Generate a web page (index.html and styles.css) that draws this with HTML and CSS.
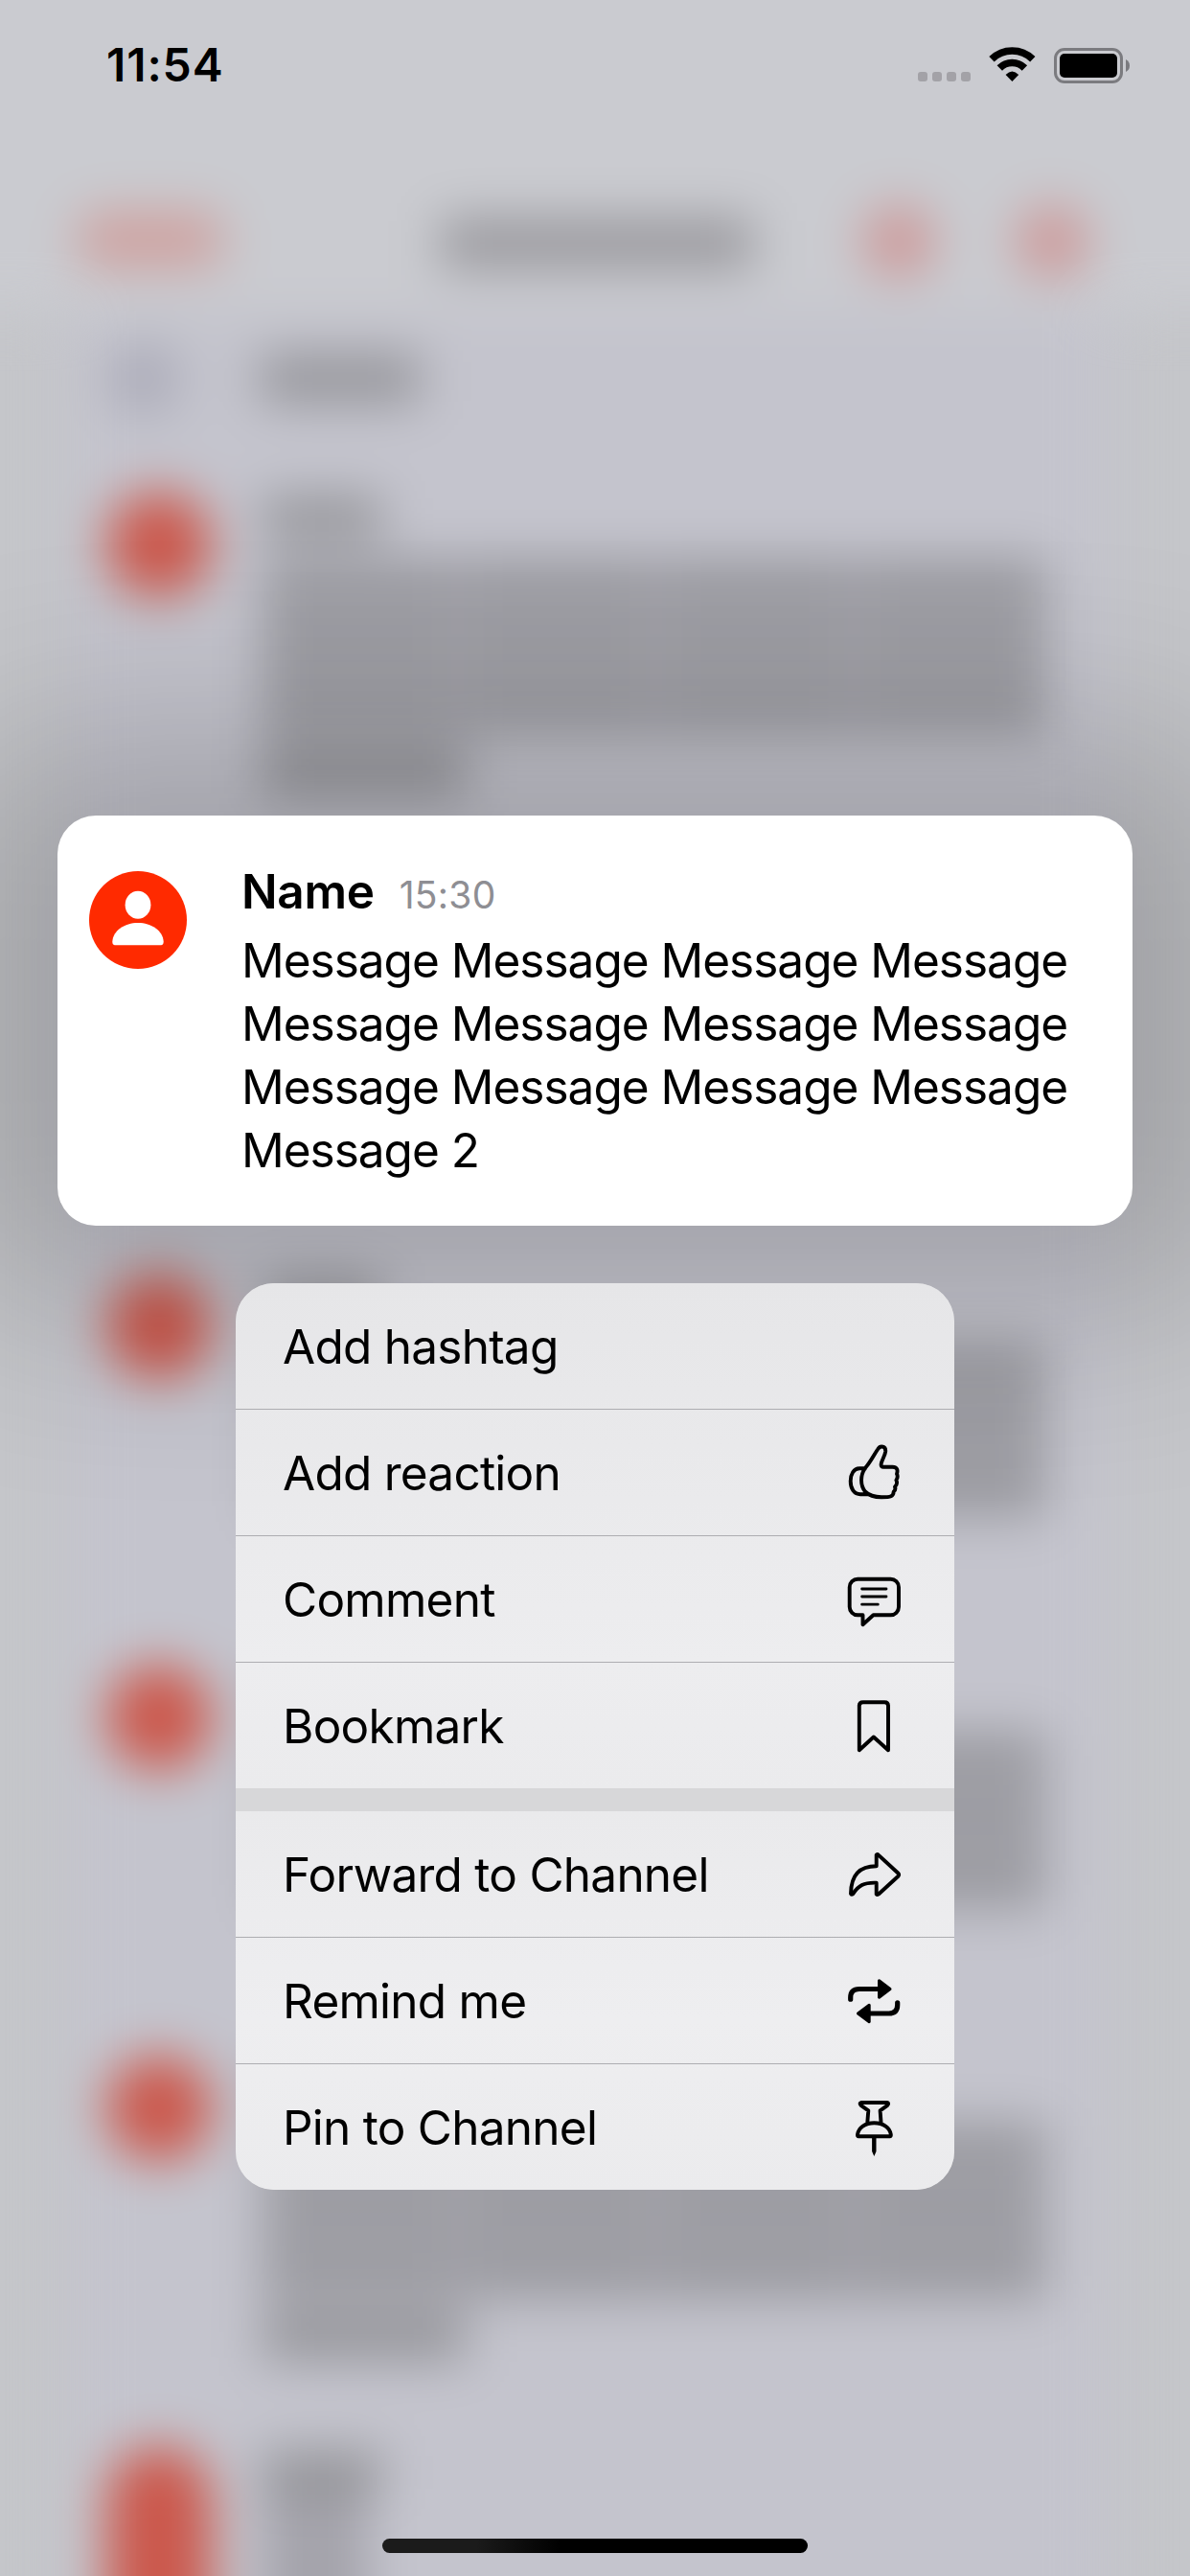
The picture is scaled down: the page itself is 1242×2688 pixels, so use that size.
FILE: index.html
```html
<!DOCTYPE html>
<html lang="en">
<head>
<meta charset="utf-8">
<title>Message actions</title>
<link rel="stylesheet" href="styles.css">
</head>
<body>
<div class="screen">
  <div class="backdrop" aria-hidden="true">
    <div class="bg-nav">
      <i class="bg-back"></i><i class="bg-title"></i><i class="bg-dot"></i><i class="bg-dot"></i>
    </div>
    <div class="bg-loading"><i class="bg-spinner"></i><i class="bg-label"></i></div>
    <div class="bg-message"><i class="bg-avatar"></i><div class="bg-text"><i class="bg-name"></i><i class="bg-lines"></i><i class="bg-last"></i></div></div>
    <div class="bg-message"></div>
    <div class="bg-message"><i class="bg-avatar"></i><div class="bg-text"><i class="bg-name"></i><i class="bg-lines"></i></div></div>
    <div class="bg-message"><i class="bg-avatar"></i><div class="bg-text"><i class="bg-name"></i><i class="bg-lines"></i></div></div>
    <div class="bg-message"><i class="bg-avatar"></i><div class="bg-text"><i class="bg-name"></i><i class="bg-lines"></i><i class="bg-last"></i></div></div>
    <div class="bg-message bg-message-cut"><i class="bg-avatar"></i><div class="bg-text"><i class="bg-name"></i><i class="bg-lines"></i></div></div>
  </div>

  <header class="status">
    <span class="clock">11:54</span>
    <div class="status-icons">
      <div class="cell"><i></i><i></i><i></i><i></i></div>
      <svg class="wifi" viewBox="0 0 50 38" width="50" height="38" fill="none" stroke="#000" stroke-width="7.6">
        <path d="M3 13.8A30.5 30.5 0 0 1 45.8 13.8"/>
        <path d="M11.3 23A18.3 18.3 0 0 1 37.4 23"/>
        <path d="M17.6 30Q24.4 23 31.2 30L24.4 37Z" fill="#000" stroke="none"/>
      </svg>
      <svg class="battery" viewBox="0 0 80 38" width="80" height="38">
        <rect x="1.5" y="2.5" width="69" height="34" rx="9.5" fill="none" stroke="#7b7b7f" stroke-width="3"/>
        <rect x="6" y="7" width="60" height="25" rx="5" fill="#000"/>
        <path d="M75 13Q79 15 79 19.5T75 26Z" fill="#7b7b7f"/>
      </svg>
    </div>
  </header>

  <article class="card">
    <svg class="avatar" viewBox="0 0 102 102" width="102" height="102">
      <circle cx="51" cy="51" r="51" fill="#ff2a00"/>
      <ellipse cx="51" cy="35.3" rx="13.4" ry="14.5" fill="#fff"/>
      <path d="M27 77.3Q24.3 77.3 24.3 73.5C25 62 37 54 51 54S77 62 77.7 73.5Q77.7 77.3 75 77.3Z" fill="#fff"/>
    </svg>
    <div class="card-body">
      <div class="card-head"><span class="name">Name</span><span class="time">15:30</span></div>
      <p class="text">Message Message Message Message<br>Message Message Message Message<br>Message Message Message Message<br>Message 2</p>
    </div>
  </article>

  <nav class="menu">
    <div class="group">
      <div class="item"><span>Add hashtag</span></div>
      <div class="item"><span>Add reaction</span>
        <svg class="icon" viewBox="0 0 60 61"><path d="M20.7 26.3C27 19 29.5 13 34.3 6C37 1.8 42.6 3.2 42.2 8.5C41.6 14 37.8 18 37.6 22.2Q37.6 24.7 40 24.7H49.5C54 24.7 55.5 27.5 54 32Q55.7 35 53.4 38.5Q55.2 42.5 52 45.5Q53.2 48.5 50.7 50.5C50.5 55.5 48 56.3 38 56.3C30 56.2 24.5 54 21 50.5C15.5 44 16 33 20.7 26.3ZM21 26.3H15C9 26.3 5.7 32.5 5.7 39.5C5.7 47.5 9.5 53.2 16 53.2H24"/></svg></div>
      <div class="item"><span>Comment</span>
        <svg class="icon" viewBox="0 0 60 61"><path d="M13.2 9.7H47.5A8.5 8.5 0 0 1 56 18.2V38.8A8.5 8.5 0 0 1 47.5 47.3H29.5L18.5 57.3V47.3H13.2A8.5 8.5 0 0 1 4.7 38.8V18.2A8.5 8.5 0 0 1 13.2 9.7Z"/><path class="thin" d="M17.6 20H43M17.6 28H43M17.6 36.2H34.3"/></svg></div>
      <div class="item"><span>Bookmark</span>
        <svg class="icon" viewBox="0 0 60 61"><path d="M18.7 6.3H41.2Q45 6.3 45 10V56.3L29.8 42.5L14.8 56.3V10Q14.8 6.3 18.7 6.3Z"/></svg></div>
    </div>
    <div class="group">
      <div class="item"><span>Forward to Channel</span>
        <svg class="icon" viewBox="0 0 60 61"><path d="M32.7 22.3V10.6Q33.5 9.3 34.8 10.6L55.5 29.8Q56.7 31.2 55.5 32.7L35 51.5Q33.5 52.5 32.7 51.5V39.7C19.5 39.2 13.8 42.5 8.3 51.2Q6.6 52.5 6 51C6.3 31 15.5 22.3 32.7 22.3Z"/></svg></div>
      <div class="item"><span>Remind me</span>
        <svg class="icon" viewBox="0 0 60 61"><path class="thick" d="M5.7 29.2V27.5Q5.7 18.5 14.7 18.5H36M54.7 32.8V35Q54.7 44 45.7 44H25"/><path class="solid" d="M35.5 9.8L47 18.5L35.5 27.2ZM25.2 35.3L13.5 44L25.2 52.7Z"/></svg></div>
      <div class="item"><span>Pin to Channel</span>
        <svg class="icon" viewBox="0 0 60 61"><path d="M17 5H43.7Q46.3 5.5 44.3 7.8L36.6 13.3L37.6 27M23.2 27L24.3 13.3L16.5 7.8Q14.5 5.5 17 5M13.8 40.3Q12.8 40.3 13 38.3C14 31 21 26.3 30.4 26.3S46.8 31 47.8 38.3Q48 40.3 47 40.3Z"/><path d="M28.1 41H32.5V56L30.3 61L28.1 56Z" fill="#000" stroke="none"/></svg></div>
    </div>
  </nav>

  <div class="home"></div>
</div>
</body>
</html>
```
FILE: styles.css
```css
* { box-sizing: border-box; }

body {
  margin: 0;
  font-family: Inter, "Liberation Sans", sans-serif;
  color: #000;
}

.screen {
  position: relative;
  isolation: isolate;
  width: 1242px;
  height: 2688px;
  overflow: hidden;
  display: flex;
  flex-direction: column;
  background: #c5c6ca;
}

/* Blurred conversation behind the menu */
.backdrop {
  position: absolute;
  z-index: -2;
  inset: -100px 0;
  padding-top: 100px;
  background: linear-gradient(90deg, transparent 50px, #c4c4cd 90px, #c4c4cd 1140px, transparent 1180px);
  filter: blur(26px);
}
.backdrop i { display: block; flex: none; }

.bg-nav {
  display: flex;
  align-items: flex-end;
  height: 425px;
  margin: -100px -100px 0;
  padding: 0 200px 46px 182px;
  background: #cacbd0;
}
.bg-back { width: 150px; height: 58px; border-radius: 20px; background: #cea19f; }
.bg-title { width: 326px; height: 50px; margin: 0 114px 0 228px; background: #97969b; }
.bg-dot { width: 76px; height: 76px; margin-bottom: -11px; border-radius: 50%; background: #cd9999; }
.bg-dot + .bg-dot { margin-left: 84px; }

.bg-loading { display: flex; align-items: center; height: 136px; padding: 4px 0 0 112px; }
.bg-spinner { width: 76px; height: 76px; border-radius: 50%; background: #acacb9; }
.bg-label { width: 166px; height: 50px; margin-left: 84px; background: #949499; }

.bg-message { display: flex; height: 408px; padding: 52px 0 0 111px; }
.bg-avatar { width: 110px; height: 110px; border-radius: 55px; background: #cb584c; }
.bg-text { margin-left: 53px; padding-top: 6px; }
.bg-name { width: 124px; height: 42px; background: #919195; }
.bg-lines {
  width: 818px;
  height: 187px;
  margin-top: 24px;
  background:
    repeating-linear-gradient(90deg, transparent 0 200px, #b0afb7 200px 207px),
    repeating-linear-gradient(#98989e 0 46px, #acacb3 46px 63px);
}
.bg-last { width: 212px; height: 50px; margin-top: 8px; background: #949499; }
.bg-message-cut { height: 340px; }
.bg-message-cut .bg-avatar { height: 280px; }
.bg-message-cut .bg-lines { width: 110px; margin-top: 0; background: #a4a3ab; }

/* Status bar */
.status {
  display: flex;
  justify-content: space-between;
  height: 120px;
  padding: 0 62px 0 111px;
}
.clock { margin-top: 38px; font-size: 48px; font-weight: 600; line-height: 60px; letter-spacing: 0.9px; }
.status-icons { display: flex; align-items: flex-end; height: 86px; }
.cell { display: flex; gap: 5px; padding-bottom: 1px; }
.cell i { width: 10px; height: 10px; border-radius: 3px; background: #a3a2a7; }
.wifi { margin-left: 19px; }
.battery { margin-left: 18px; margin-bottom: -1px; }

/* Highlighted message */
.card {
  position: relative;
  display: flex;
  align-items: flex-start;
  width: 1122px;
  height: 428px;
  margin: 731px 0 0 60px;
  padding: 49px 0 0 33px;
  border-radius: 40px;
  background: #fff;
}
/* Wide soft shade around the card, drawn over the conversation */
.card::before {
  content: "";
  position: absolute;
  z-index: -1;
  inset: -80px -110px;
  border-radius: 80px;
  background: rgba(0, 0, 0, 0.185);
  filter: blur(100px);
}
.avatar { flex: none; margin-top: 9px; }
.card-body { margin-left: 57px; }
.card-head { display: flex; align-items: baseline; line-height: 60px; }
.name { font-size: 49.5px; font-weight: 600; letter-spacing: -0.3px; }
.time { margin-left: 26px; font-size: 39px; letter-spacing: 0.3px; color: #8e8e93; }
.text { margin: 5px 0 0; font-size: 49.5px; line-height: 66px; letter-spacing: -1px; white-space: nowrap; }

/* Context menu */
.menu {
  position: relative;
  display: flex;
  flex-direction: column;
  gap: 24px;
  width: 750px;
  margin: 60px 0 0 246px;
  border-radius: 40px;
  overflow: hidden;
  background: #d7d7d9;
}
.group { background: linear-gradient(#e6e6e8, #ededef 75%, #ebebed); }
.group + .group { background: linear-gradient(#eaeaec, #eeeef0 55%, #ebebed); }
.item {
  display: flex;
  align-items: center;
  justify-content: space-between;
  height: 131px;
  padding: 0 54px 0 49px;
  font-size: 49.5px;
  letter-spacing: -0.75px;
}
.item + .item { height: 132px; border-top: 1px solid #adadb1; }
.icon {
  width: 60px;
  height: 61px;
  fill: none;
  stroke: #000;
  stroke-width: 3.9;
  stroke-linecap: round;
  stroke-linejoin: round;
}
.icon .thin { stroke-width: 2.8; }
.icon .thick { stroke-width: 5.2; }
.icon .solid { fill: #000; stroke-width: 3; }

.home {
  width: 444px;
  height: 15px;
  margin: auto auto 24px 399px;
  border-radius: 8px;
  background: linear-gradient(90deg, #1b1b1b 22%, #000 42%);
}
```
